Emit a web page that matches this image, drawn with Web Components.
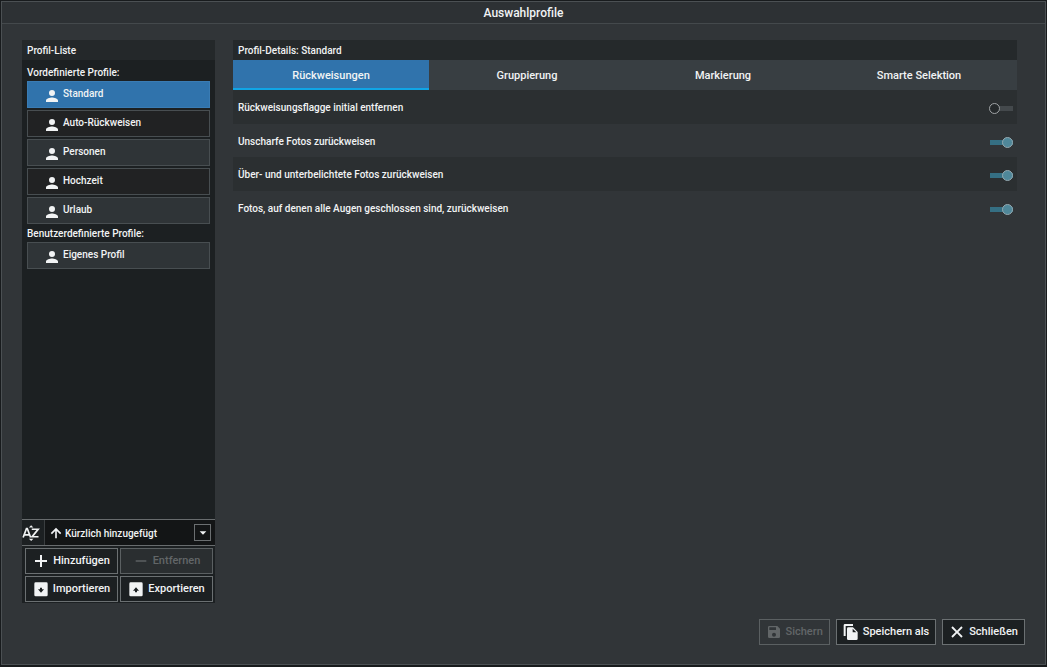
<!DOCTYPE html>
<html lang="de">
<head>
<meta charset="utf-8">
<title>Auswahlprofile</title>
<style>
  html { height: 100%; background: #181b1d; }
  body { margin: 0; min-height: 100vh; display: flex; font: 500 10px/14px Roboto, "Liberation Sans", sans-serif; color: #f1f3f4; }
</style>
</head>
<body>
<profile-dialog heading="Auswahlprofile">
  <profile-list slot="list" heading="Profil-Liste">
    <profile-group label="Vordefinierte Profile:">
      <profile-item selected>Standard</profile-item>
      <profile-item dark>Auto-Rückweisen</profile-item>
      <profile-item>Personen</profile-item>
      <profile-item dark>Hochzeit</profile-item>
      <profile-item>Urlaub</profile-item>
    </profile-group>
    <profile-group label="Benutzerdefinierte Profile:">
      <profile-item>Eigenes Profil</profile-item>
    </profile-group>
    <sort-bar slot="tools"></sort-bar>
    <action-button slot="actions" icon="plus">Hinzufügen</action-button>
    <action-button slot="actions" icon="minus" disabled>Entfernen</action-button>
    <action-button slot="actions" icon="import">Importieren</action-button>
    <action-button slot="actions" icon="export">Exportieren</action-button>
  </profile-list>
  <profile-details heading="Profil-Details: Standard">
    <tab-button slot="tabs" selected>Rückweisungen</tab-button>
    <tab-button slot="tabs">Gruppierung</tab-button>
    <tab-button slot="tabs">Markierung</tab-button>
    <tab-button slot="tabs">Smarte Selektion</tab-button>
    <toggle-row dark label="Rückweisungsflagge initial entfernen"></toggle-row>
    <toggle-row checked label="Unscharfe Fotos zurückweisen"></toggle-row>
    <toggle-row dark checked label="Über- und unterbelichtete Fotos zurückweisen"></toggle-row>
    <toggle-row checked label="Fotos, auf denen alle Augen geschlossen sind, zurückweisen"></toggle-row>
  </profile-details>
  <action-button slot="footer" icon="save" disabled>Sichern</action-button>
  <action-button slot="footer" icon="copy">Speichern als</action-button>
  <action-button slot="footer" icon="close">Schließen</action-button>
</profile-dialog>

<script>
const svg = (size, body) => `<svg width="${size}" height="${size}" viewBox="0 0 24 24" fill="currentColor" aria-hidden="true">${body}</svg>`;
const ICONS = {
  plus: svg(16, '<path d="M21 13.500H13.500V21H10.500V13.500H3V10.500H10.500V3H13.500V10.500H21Z"/>'),
  minus: svg(16, '<path d="M4 11h16v2H4z"/>'),
  import: svg(16, '<path fill-rule="evenodd" d="M4 2h16a2 2 0 0 1 2 2v17a2 2 0 0 1-2 2H4a2 2 0 0 1-2-2V4a2 2 0 0 1 2-2ZM10.500 10v2.500H7.500L12 17.500l4.500-5h-3V10Z"/>'),
  export: svg(16, '<path fill-rule="evenodd" d="M4 2h16a2 2 0 0 1 2 2v17a2 2 0 0 1-2 2H4a2 2 0 0 1-2-2V4a2 2 0 0 1 2-2ZM12 9.500l-4.500 5h3V17h3v-2.500h3Z"/>'),
  save: svg(16, '<path d="M17 3H5a2 2 0 0 0-2 2v14a2 2 0 0 0 2 2h14a2 2 0 0 0 2-2V7l-4-4Zm-5 16a3 3 0 1 1 0-6 3 3 0 0 1 0 6ZM15 9H5V5h10v4Z"/>'),
  copy: svg(16, '<path d="M15 0H3a2 2 0 0 0-2 2v16h3V3h11V0Zm0 5 7 7v10a2 2 0 0 1-2 2H8a2 2 0 0 1-2-2V7a2 2 0 0 1 2-2h7Zm-.5 7.500h5.500L14.500 7V12.500Z"/>'),
  close: svg(16, '<path d="M20.500 5.500 18.500 3.500 12 10 5.500 3.500 3.500 5.500 10 12 3.500 18.500 5.500 20.500 12 14 18.500 20.500 20.500 18.500 14 12Z"/>'),
  person: svg(18, '<path d="M12 12a4 4 0 1 0 0-8 4 4 0 0 0 0 8Zm0 2c-2.700 0-8 1.300-8 4v2h16v-2c0-2.700-5.300-4-8-4Z"/>'),
  up: svg(14, '<path d="M3 12l2 2 5.600-5.600V21h2.800V8.400L19 14l2-2-9-9Z"/>'),
  caret: svg(16, '<path d="M7 9.500l5 5 5-5Z"/>'),
  sort: svg(18, '<path fill="none" stroke="currentColor" stroke-width="2.300" d="M1.500 18 6 6h1L11.500 18M3.200 14.500h6.600M13 7h8.500L13.500 17H22"/><path d="M9.200 4.500h6L12.200 1.500ZM9.200 19.500h6l-3 3Z"/>')
};
const esc = s => (s || '').replace(/[&<>"]/g, c => `&#${c.charCodeAt(0)};`);

function define(name, css, html) {
  customElements.define(name, class extends HTMLElement {
    constructor() { super(); this.attachShadow({ mode: 'open' }); }
    connectedCallback() {
      const t = document.createElement('template');
      t.innerHTML = `<style>*{box-sizing:border-box}svg{display:block;flex:none}button,select{font:inherit;color:inherit;margin:0}${css}</style>${html(this)}`;
      this.shadowRoot.replaceChildren(t.content.cloneNode(true));
    }
  });
}

define('profile-dialog', `
  :host { flex: 1; display: flex; flex-direction: column; box-sizing: border-box; margin: 1px 1px 2px; border: 1px solid #4b5053; background: #313538; }
  header { height: 22px; border-bottom: 1px solid #44494c; background: #2d3134; text-align: center; }
  h1 { margin: 0; font-size: 12px; line-height: 22px; font-weight: 500; }
  main { flex: 1; display: flex; gap: 18px; padding: 16px 28px 0 20px; }
  footer { display: flex; justify-content: flex-end; gap: 6px; padding: 16px 20px 19px; }
`, e => `<header><h1>${esc(e.getAttribute('heading'))}</h1></header>
  <main><slot name="list"></slot><slot></slot></main>
  <footer><slot name="footer"></slot></footer>`);

define('profile-list', `
  :host { flex: none; width: 193px; display: flex; flex-direction: column; background: #1c2022; }
  h2 { margin: 0; padding: 4px 5px 2px; height: 20px; background: #24282a; font: inherit; }
  .items { flex: 1; padding: 5px 5px 0; }
  .actions { display: grid; grid-template-columns: 1fr 1fr; gap: 2px; padding: 2px 2px 1px 3px; }
`, e => `<h2>${esc(e.getAttribute('heading'))}</h2>
  <div class="items"><slot></slot></div>
  <slot name="tools"></slot>
  <div class="actions"><slot name="actions"></slot></div>`);

define('profile-group', `
  :host { display: block; margin-bottom: 2px; }
  h3 { margin: 0; font: inherit; line-height: 16px; }
  div { display: flex; flex-direction: column; gap: 2px; }
`, e => `<h3>${esc(e.getAttribute('label'))}</h3><div><slot></slot></div>`);

define('profile-item', `
  :host { display: block; --fill: #2f3437; --line: #484e51; }
  :host([dark]) { --fill: #212223; }
  :host([selected]) { --fill: #3073ac; --line: #3a7cb4; }
  button { display: flex; align-items: center; gap: 2px; width: 100%; height: 27px; padding: 0 0 0 15px; border: 1px solid var(--line); background: var(--fill); text-align: left; }
  svg { margin-top: 3px; }
  span { padding-bottom: 1px; }
`, () => `<button type="button">${ICONS.person}<span><slot></slot></span></button>`);

define('sort-bar', `
  :host { display: flex; align-items: center; height: 27px; box-sizing: border-box; border: solid #686c6e; border-width: 1px 0; background: #1c2022; }
  .sort { width: 22px; }
  .box { flex: 1; align-self: stretch; display: grid; grid-template-columns: 22px 1fr 21px; align-items: center; border-left: 1px solid #3a3e40; background: #131516; }
  .up { grid-area: 1 / 1; padding-left: 4px; }
  select { grid-area: 1 / 1 / 2 / 4; appearance: none; width: 100%; height: 24px; padding: 2px 24px 0 20px; border: 0; background: none; }
  .caret { grid-area: 1 / 3; width: 17px; height: 17px; border: 1px solid #6b6f71; pointer-events: none; display: grid; place-items: center; }
`, () => `<span class="sort">${ICONS.sort}</span><div class="box"><span class="up">${ICONS.up}</span>
  <select aria-label="Sortierung"><option>Kürzlich hinzugefügt</option></select>
  <span class="caret">${ICONS.caret}</span></div>`);

define('action-button', `
  :host { display: block; }
  button { display: flex; align-items: center; justify-content: center; gap: 4px; width: 100%; height: 26px; padding: 0 6px; border: 1px solid #6b7072; background: #1c2022; font-size: 11px; white-space: nowrap; }
  button:disabled { color: #626668; background: #2a2e30; border-color: #5b6062; }
  :host([slot="footer"]) button:disabled { background: #313538; }
`, e => `<button type="button"${e.hasAttribute('disabled') ? ' disabled' : ''}>${ICONS[e.getAttribute('icon')]}<span><slot></slot></span></button>`);

define('profile-details', `
  :host { flex: 1; min-width: 0; }
  h2 { margin: 0; padding: 4px 5px 2px; height: 20px; background: #25292b; font: inherit; }
  nav { display: grid; grid-template-columns: repeat(4, 1fr); }
`, e => `<h2>${esc(e.getAttribute('heading'))}</h2><nav><slot name="tabs"></slot></nav><slot></slot>`);

define('tab-button', `
  :host { display: block; }
  button { width: 100%; height: 30px; padding: 4px 0 0; border: 0; border-bottom: 2px solid #383e42; background: #383e42; font-size: 11px; }
  :host([selected]) button { background: #3073ac; border-color: #10a5e6; }
`, () => `<button type="button"><slot></slot></button>`);

define('toggle-row', `
  :host { display: flex; align-items: center; justify-content: space-between; height: 34px; box-sizing: border-box; padding: 0 4px 0 5px; }
  :host([dark]) { background: #2b2f31; }
  :host(:not([dark])) { height: 33px; }
  label { padding-top: 2px; }
  input { appearance: none; display: flex; align-items: center; width: 24px; height: 11px; margin: 3px 0 0; background: linear-gradient(#44494c, #44494c) center / 23px 5px no-repeat; }
  input::before { content: ""; box-sizing: border-box; width: 11px; height: 11px; border: 1px solid #a0a4a6; border-radius: 50%; background: #25292b; }
  input:checked { justify-content: flex-end; background-image: linear-gradient(#356f83, #356f83); }
  input:checked::before { background: #4f8799; border-color: #95a9b0; }
`, e => `<label for="t">${esc(e.getAttribute('label'))}</label><input id="t" type="checkbox" role="switch"${e.hasAttribute('checked') ? ' checked' : ''}>`);
</script>
</body>
</html>
